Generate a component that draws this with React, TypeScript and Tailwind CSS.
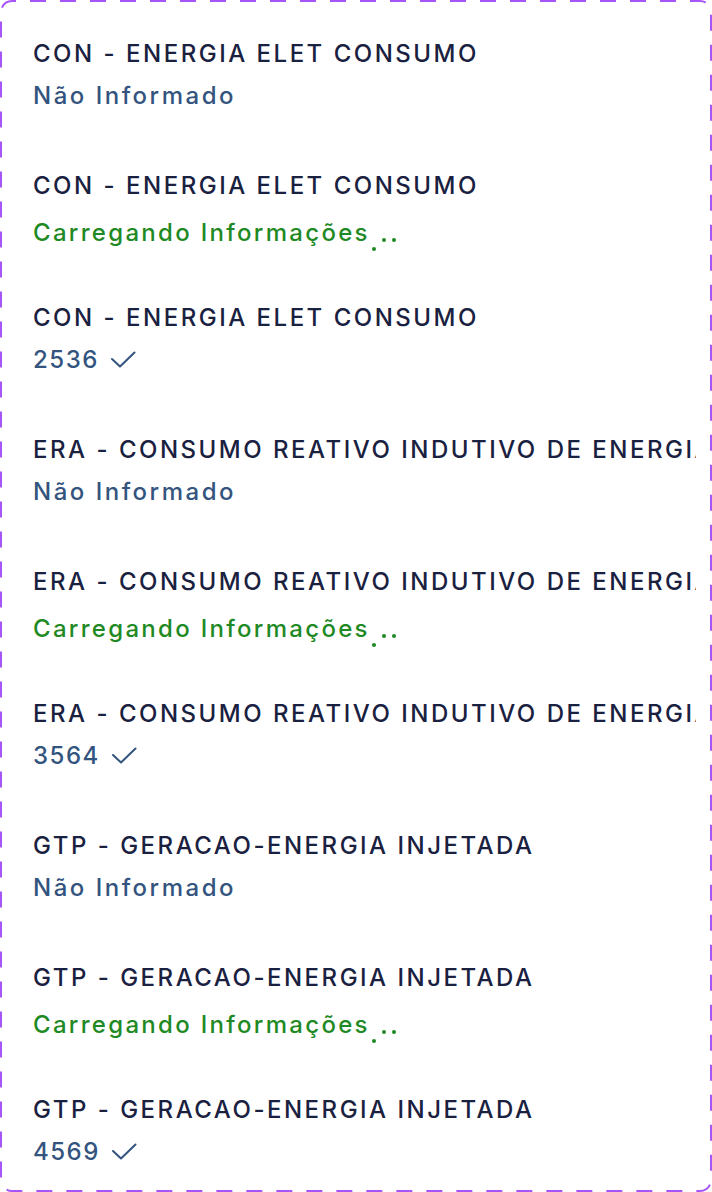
import React from "react";

type Kind = "none" | "loading" | "value";

const rows: { title: string; kind: Kind; value?: string }[] = [
  { title: "CON - ENERGIA ELET CONSUMO", kind: "none" },
  { title: "CON - ENERGIA ELET CONSUMO", kind: "loading" },
  { title: "CON - ENERGIA ELET CONSUMO", kind: "value", value: "2536" },
  { title: "ERA - CONSUMO REATIVO INDUTIVO DE ENERGIA", kind: "none" },
  { title: "ERA - CONSUMO REATIVO INDUTIVO DE ENERGIA", kind: "loading" },
  { title: "ERA - CONSUMO REATIVO INDUTIVO DE ENERGIA", kind: "value", value: "3564" },
  { title: "GTP - GERACAO-ENERGIA INJETADA", kind: "none" },
  { title: "GTP - GERACAO-ENERGIA INJETADA", kind: "loading" },
  { title: "GTP - GERACAO-ENERGIA INJETADA", kind: "value", value: "4569" },
];

function CheckIcon() {
  return (
    <svg width="25" height="18" viewBox="0 0 25 18" fill="none" className="ml-[12px]">
      <path d="M1 8 L9 15.5 L23.5 1.5" stroke="#33547e" strokeWidth="2" strokeLinecap="round" strokeLinejoin="round" />
    </svg>
  );
}

function Row({ title, kind, value }: { title: string; kind: Kind; value?: string }) {
  return (
    <div className="flex h-[132px] flex-col">
      <div className="overflow-hidden whitespace-nowrap text-[24px] font-[450] leading-[30px] tracking-[2.5px] text-[#1a2140]">
        {title}
      </div>
      {kind === "none" && (
        <div className="mt-[12px] text-[24px] font-[450] leading-[30px] tracking-[2.5px] text-[#33547e]">Não Informado</div>
      )}
      {kind === "loading" && (
        <div className="mt-[17px] flex items-end text-[24px] font-[450] leading-[30px] tracking-[2.3px] text-[#1f8a24]">
          <span>Carregando Informações</span>
          <span className="ml-[2px] flex h-[30px] w-[30px] items-end gap-[6px] pb-[6px]">
            <span className="relative top-[9px] h-[4px] w-[4px] rounded-full bg-[#1f8a24]" />
            <span className="h-[4px] w-[4px] rounded-full bg-[#1f8a24]" />
            <span className="h-[4px] w-[4px] rounded-full bg-[#1f8a24]" />
          </span>
        </div>
      )}
      {kind === "value" && (
        <div className="mt-[12px] flex items-center text-[24px] font-[450] leading-[30px] tracking-[1.5px] text-[#33547e]">
          <span>{value}</span>
          <CheckIcon />
        </div>
      )}
    </div>
  );
}

export default function App() {
  return (
    <div
      className="relative h-[1192px] w-[712px] overflow-hidden bg-white pl-[33px] pr-[16px] pt-[39px]"
      style={{ fontFamily: "Inter, 'Noto Sans', sans-serif" }}
    >
      <svg className="pointer-events-none absolute inset-0" width="712" height="1192" viewBox="0 0 712 1192">
        <rect
          x="1"
          y="1"
          width="710"
          height="1190"
          rx="11"
          fill="none"
          stroke="#a855f7"
          strokeWidth="2"
          strokeDasharray="16 14"
          strokeDashoffset="12"
        />
      </svg>
      {rows.map((r, i) => (
        <Row key={i} {...r} />
      ))}
    </div>
  );
}
